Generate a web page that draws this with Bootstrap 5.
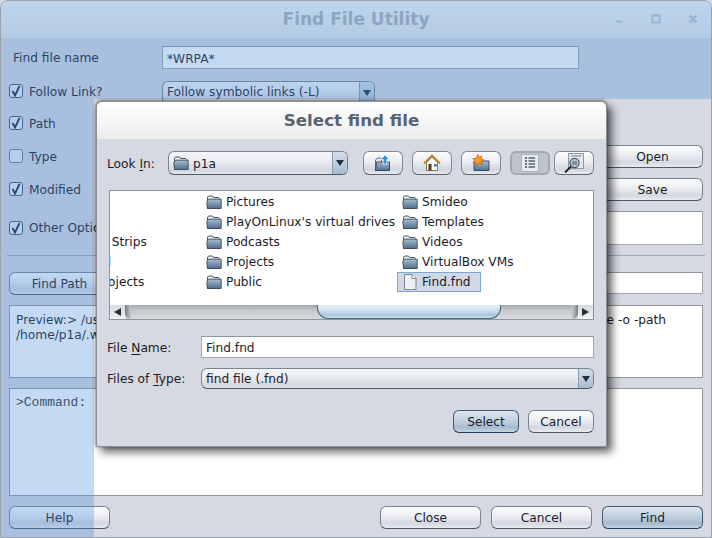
<!DOCTYPE html>
<html lang="en">
  <head>
    <meta charset="UTF-8" />
    <meta name="viewport" content="width=device-width, initial-scale=1.0" />
    <title>Find File Utility</title>
    <link
      href="https://cdn.jsdelivr.net/npm/bootstrap@5.3.0/dist/css/bootstrap.min.css"
      rel="stylesheet"
    />
    <style>
      html, body { margin: 0; background: #d6d9e1; }
      body, .btn, .form-control { font-family: "DejaVu Sans", sans-serif; font-size: 12.2px; color: #1c1c28; }

      .app-win { position: relative; width: 712px; height: 538px; overflow: hidden; background: #d6d9e1; border: 1px solid #9aa3ae; border-radius: 8px 8px 0 0; }
      .app-title { height: 37px; background: linear-gradient(#f6f7f7, #e8e9e9); font-size: 17px; font-weight: 700; color: #aeb2b3; }
      .app-controls { right: 12px; top: 12px; gap: 25px; }
      .app-body { padding: 8px 8px 0 8px; }

      .row-h { height: 23px; }
      .mt-12 { margin-top: 12px; }
      .mt-10 { margin-top: 10px; }
      .mt-8 { margin-top: 8px; }
      .left-col { width: 153px; flex: none; }
      .plain-lbl { padding-left: 4px; }
      .check-lbl { gap: 6px; }
      .under-dlg { width: 417px; height: 100%; }
      .txt-low { padding-top: 2px; }

      .form-check-input.swing-check { width: 14px; height: 14px; margin: 0; flex: none; border: 1px solid #69798c; border-radius: 3px; background-color: #e9edf3; box-shadow: none; }
      .form-check-input.swing-check:checked { background-color: #e9edf3; border-color: #3f5670; background-size: 14px; background-image: url("data:image/svg+xml,%3Csvg xmlns='http://www.w3.org/2000/svg' viewBox='0 0 14 14'%3E%3Cpath d='M3.5 7l2.500 4.500L10.500 2' fill='none' stroke='%23182838' stroke-width='1.8'/%3E%3C/svg%3E"); }
      .form-check-input.swing-check.check-high { margin-top: -2px; }

      .swing-field.form-control { height: 100%; padding: 2px 4px 0 4px; border: 1px solid #a3a8b0; border-top-color: #8f959e; border-radius: 0; background: #fff; box-shadow: none; line-height: 1; }
      .swing-box { border: 1px solid #92979f; background: #fff; padding: 6px 6px; line-height: 15px; }
      .preview-box { height: 73px; padding-top: 7px; }
      .preview-tail { margin-left: auto; margin-right: 30px; }
      .command-box { height: 108px; font-family: "Liberation Mono", monospace; font-size: 13px; color: #33363c; }
      .sep-line { height: 1px; margin: 10px -2px 16px -2px; background: #a5aab2; }

      .swing-btn.btn { width: 101px; height: 23px; padding: 2px 0 0 0; flex: none; border: 1px solid #7a8490; border-bottom-color: #4e5864; border-radius: 6px; background: linear-gradient(#fbfcfd, #ebedf2 45%, #d4d8e0 78%, #e8ebf0); line-height: 1; color: #1c1c28; }
      .swing-btn.btn-def { border-color: #3f5a76; border-bottom-color: #25405c; background: linear-gradient(#dbe4ed, #c4d2e0 45%, #a6bbcf 78%, #c5d4e2); }
      .swing-btn.dlg-btn { width: 66px; }

      .combo-box { height: 23px; border: 1px solid #7a8490; border-bottom-color: #4e5864; border-radius: 6px; overflow: hidden; background: linear-gradient(#f4f5f8, #e9ebf0 45%, #d3d7df 85%, #e3e6ec); }
      .combo-arrow { width: 15px; flex: none; height: 100%; border-left: 1px solid #8d9aa8; background: linear-gradient(#d3deea, #a8bdd2); }
      .combo-arrow::after { content: ""; border-left: 4px solid transparent; border-right: 4px solid transparent; border-top: 6px solid #22303e; }

      /* the translucent pane the app puts over its window while the dialog is open */
      .glass-pane { position: absolute; background: rgba(72, 139, 218, 0.32); pointer-events: none; }
      .glass-top { left: 0; top: 0; width: 100%; height: 98px; }
      .glass-left { left: 0; top: 98px; width: 93px; bottom: 0; }

      .dlg-win { position: absolute; left: 95px; top: 100px; width: 511px; height: 346px; border: 1px solid #8b9096; border-radius: 6px 6px 0 0; background: #d6d9e1; box-shadow: 5px 5px 9px rgba(0, 0, 0, 0.62), 0 -1px 3px rgba(0, 0, 0, 0.35), -1px 0 3px rgba(0, 0, 0, 0.25); overflow: visible; }
      .dlg-title { height: 37px; border-radius: 5px 5px 0 0; background: linear-gradient(#ffffff, #ececec); font-size: 16.700px; font-weight: 700; color: #58646f; }
      .dlg-body { padding: 12px 12px 0 10px; }
      .look-lbl { width: 61px; flex: none; }
      .tool-btn { width: 40px; height: 24px; flex: none; border: 1px solid #7f8893; border-bottom-color: #5c6570; border-radius: 6px; background: linear-gradient(#fbfcfd, #ebedf2 45%, #d2d6de 80%, #e8ebf0); }
      .tool-on { border: 2px solid #a4a9b1; background: #bfc3cb; }

      .file-pane { margin: 15px 0 16px 2px; border: 1px solid #8e949c; background: #fff; height: 130px; overflow: hidden; }
      .file-cols { height: 114px; padding-top: 1px; }
      .file-col { flex: none; }
      .col-a { width: 156px; margin-left: -65px; }
      .col-b { width: 196px; }
      .file-item { height: 20px; padding: 0 4px; gap: 4px; border: 1px solid transparent; white-space: nowrap; }
      .file-sel { width: 84px; background: #cfd8e4; border-color: #7ca6d3; }

      .scroll-track { height: 14px; background: linear-gradient(#a3a7ad, #c3c6cc 35%, #d9dbe0); position: relative; }
      .scroll-end { width: 15px; height: 100%; flex: none; background: linear-gradient(#d8dade, #eef0f3); }
      .arrow-l { border-top: 4px solid transparent; border-bottom: 4px solid transparent; border-right: 7px solid #2a2f36; }
      .arrow-r { border-top: 4px solid transparent; border-bottom: 4px solid transparent; border-left: 7px solid #2a2f36; }
      .scroll-thumb { position: absolute; left: 207px; width: 184px; top: 0; height: 14px; border: 1px solid #4a6680; border-top: 0; border-radius: 0 0 11px 11px; background: linear-gradient(#eaf1f7, #c3d7e8 55%, #a9c6dd 80%, #d5e3ee); }
      .scroll-cap { width: 6px; height: 100%; flex: none; }
      .cap-l { border-radius: 0 0 0 6px; background: linear-gradient(90deg, #777c83, #c8cbd0); }
      .cap-r { border-radius: 0 0 6px 0; background: linear-gradient(270deg, #777c83, #c8cbd0); }

      .name-lbl { width: 94px; flex: none; }
      .field-row { height: 22px; }
      u { text-underline-offset: 2px; }
    </style>
  </head>
  <body>
    <svg width="0" height="0" class="position-absolute">
      <defs>
        <linearGradient id="fold" x1="0" y1="0" x2="0" y2="1">
          <stop offset="0" stop-color="#a9bdd1" />
          <stop offset="1" stop-color="#4f6d8e" />
        </linearGradient>
        <symbol id="ico-folder" viewBox="0 0 16 16">
          <path d="M1.500 14.500V3.200l1-1.200h4l1.200 1.500h5l.8 1v10z" fill="#e9ecf0" stroke="#46525f" />
          <path d="M.8 7.500l2-2.300h12.400v9.300H1.500z" fill="url(#fold)" stroke="#3e4c5b" stroke-width=".9" />
        </symbol>
      </defs>
    </svg>

    <div class="app-win">
      <!-- main window -->
      <div class="app-title d-flex align-items-center justify-content-center position-relative">
        Find File Utility
        <div class="app-controls position-absolute d-flex align-items-center">
          <svg width="12" height="12" viewBox="0 0 12 12"><path d="M3 8.500h6" stroke="#c2c6c8" stroke-width="2" /></svg>
          <svg width="12" height="12" viewBox="0 0 12 12"><rect x="2.500" y="2.500" width="7" height="7" fill="none" stroke="#c2c6c8" stroke-width="2" /></svg>
          <svg width="12" height="12" viewBox="0 0 12 12"><path d="M2.500 2.500l7 7M9.500 2.500l-7 7" stroke="#c2c6c8" stroke-width="2.400" /></svg>
        </div>
      </div>

      <div class="app-body">
        <div class="d-flex align-items-center row-h">
          <div class="left-col plain-lbl txt-low">Find file name</div>
          <div class="under-dlg">
            <input class="form-control swing-field" value="*WRPA*" />
          </div>
        </div>

        <div class="d-flex align-items-center row-h mt-12">
          <label class="left-col d-flex align-items-center check-lbl"><input type="checkbox" class="form-check-input swing-check check-high" checked /> <span>Follow Link?</span></label>
          <div class="combo-box d-flex align-items-center" style="width: 213px">
            <span class="flex-grow-1 ps-1">Follow symbolic links (-L)</span>
            <span class="combo-arrow d-flex align-items-center justify-content-center"></span>
          </div>
        </div>

        <div class="d-flex align-items-center row-h mt-8">
          <label class="left-col d-flex align-items-center check-lbl"><input type="checkbox" class="form-check-input swing-check" checked /> <span class="txt-low">Path</span></label>
          <div class="under-dlg"><input class="form-control swing-field" /></div>
        </div>

        <div class="d-flex align-items-center row-h mt-10">
          <label class="left-col d-flex align-items-center check-lbl"><input type="checkbox" class="form-check-input swing-check" /> <span class="txt-low">Type</span></label>
          <div class="under-dlg"><input class="form-control swing-field" /></div>
          <button class="btn swing-btn ms-auto">Open</button>
        </div>

        <div class="d-flex align-items-center row-h mt-10">
          <label class="left-col d-flex align-items-center check-lbl"><input type="checkbox" class="form-check-input swing-check" checked /> <span class="txt-low">Modified</span></label>
          <div class="under-dlg"><input class="form-control swing-field" /></div>
          <button class="btn swing-btn ms-auto">Save</button>
        </div>

        <div class="d-flex align-items-center mt-10" style="height: 34px">
          <label class="left-col d-flex align-items-center check-lbl"><input type="checkbox" class="form-check-input swing-check" checked /> <span>Other Options</span></label>
          <div class="flex-grow-1 h-100"><input class="form-control swing-field" /></div>
        </div>

        <div class="sep-line"></div>

        <div class="d-flex align-items-start row-h gap-2">
          <button class="btn swing-btn">Find Path</button>
          <div class="flex-grow-1" style="height: 22px"><input class="form-control swing-field" /></div>
        </div>

        <div class="swing-box preview-box mt-10">
          <div class="d-flex"><span>Preview:&gt; /usr/bin/find</span><span class="preview-tail">-type file -o -path</span></div>
          <div>/home/p1a/.wine</div>
        </div>

        <div class="swing-box command-box mt-10">&gt;Command:</div>

        <div class="d-flex mt-10">
          <button class="btn swing-btn">Help</button>
          <div class="ms-auto d-flex" style="gap: 10px">
            <button class="btn swing-btn">Close</button>
            <button class="btn swing-btn">Cancel</button>
            <button class="btn swing-btn btn-def">Find</button>
          </div>
        </div>
      </div>

      <div class="glass-pane glass-top"></div>
      <div class="glass-pane glass-left"></div>

      <!-- file chooser -->
      <div class="dlg-win">
        <div class="dlg-title d-flex align-items-center justify-content-center">Select find file</div>
        <div class="dlg-body">
          <div class="d-flex align-items-center" style="height: 24px">
            <div class="look-lbl txt-low">Look <u>I</u>n:</div>
            <div class="combo-box d-flex align-items-center" style="width: 180px; height: 24px">
              <span class="flex-grow-1 d-flex align-items-center ps-1" style="gap: 4px">
                <svg width="16" height="16"><use href="#ico-folder" /></svg><span class="txt-low">p1a</span>
              </span>
              <span class="combo-arrow d-flex align-items-center justify-content-center"></span>
            </div>
            <div class="d-flex ms-auto" style="gap: 9px">
              <div class="tool-btn d-flex align-items-center justify-content-center">
                <svg width="18" height="18" viewBox="0 0 18 18">
                  <path d="M1.500 16.500V6l2-2h4v12.500z" fill="#dfe5eb" stroke="#3e4c5b" stroke-width=".8" />
                  <path d="M1.500 16.500L2.500 8h13v8.500z" fill="url(#fold)" stroke="#33414f" stroke-width=".9" />
                  <path d="M11 1L6.800 5.400h2.400V10h3.600V5.400h2.400z" fill="#2f8fdc" stroke="#fff" stroke-width=".7" />
                </svg>
              </div>
              <div class="tool-btn d-flex align-items-center justify-content-center">
                <svg width="18" height="18" viewBox="0 0 18 18">
                  <path d="M3.500 8.500v8h11v-8L9 3z" fill="#fbfaf0" stroke="#6e5a2c" stroke-width=".8" />
                  <path d="M1 9.500L9 1.500l8 8" fill="none" stroke="#b88a2c" stroke-width="1.800" />
                  <rect x="5.500" y="10" width="3" height="6.500" fill="#4a3a20" />
                  <rect x="11" y="10" width="2.600" height="2.600" fill="#3d6ea8" />
                </svg>
              </div>
              <div class="tool-btn d-flex align-items-center justify-content-center">
                <svg width="18" height="18" viewBox="0 0 18 18">
                  <path d="M2 16.500V7h15v9.500z" fill="url(#fold)" stroke="#33414f" stroke-width=".9" />
                  <path d="M6 .5l1.200 2.800L10 2l-1 2.900 3 1-2.800 1.500 1 2.900-3-1.300L5 11.500 4.200 8.600 1 9l1.900-2.400L.8 4.500l3 0z" fill="#f6a21d" stroke="#d9480f" stroke-width=".7" />
                </svg>
              </div>
              <div class="tool-btn tool-on d-flex align-items-center justify-content-center">
                <svg width="18" height="18" viewBox="0 0 18 18">
                  <rect x=".5" y=".5" width="17" height="17" fill="#e6ebf1" stroke="#a9b3be" />
                  <path d="M4 4h2M4 7h2M4 10h2M4 13h2" stroke="#3c4650" stroke-width="1.400" />
                  <path d="M7.500 4H14M7.500 7H14M7.500 10H14M7.500 13H14" stroke="#5a6570" stroke-width="1.400" />
                </svg>
              </div>
              <div class="tool-btn d-flex align-items-center justify-content-center" style="margin-left: -5px">
                <svg width="20" height="20" viewBox="0 0 20 20">
                  <rect x="4.500" y=".5" width="15" height="15" fill="#e3e8ee" stroke="#8f99a4" />
                  <path d="M7 3h10" stroke="#6f7a85" />
                  <circle cx="10.500" cy="10" r="4.600" fill="#b6c6d6" stroke="#4d5a67" stroke-width="1.200" />
                  <path d="M8 9h5M8 11h5" stroke="#4d5a67" />
                  <path d="M7 13.500L1 19.500" stroke="#14181c" stroke-width="1.800" />
                </svg>
              </div>
            </div>
          </div>

          <div class="file-pane">
            <div class="file-cols d-flex">
              <div class="file-col col-a d-flex flex-column align-items-start">
                <div class="file-item d-flex align-items-center"><svg width="16" height="16"><use href="#ico-folder" /></svg>Apps</div>
                <div class="file-item d-flex align-items-center"><svg width="16" height="16"><use href="#ico-folder" /></svg>Books</div>
                <div class="file-item d-flex align-items-center"><svg width="16" height="16"><use href="#ico-folder" /></svg>Comic Strips</div>
                <div class="file-item d-flex align-items-center"><svg width="16" height="16"><use href="#ico-folder" /></svg>Kennel</div>
                <div class="file-item d-flex align-items-center"><svg width="16" height="16"><use href="#ico-folder" /></svg>Our Projects</div>
              </div>
              <div class="file-col col-b d-flex flex-column align-items-start">
                <div class="file-item d-flex align-items-center"><svg width="16" height="16"><use href="#ico-folder" /></svg>Pictures</div>
                <div class="file-item d-flex align-items-center"><svg width="16" height="16"><use href="#ico-folder" /></svg>PlayOnLinux's virtual drives</div>
                <div class="file-item d-flex align-items-center"><svg width="16" height="16"><use href="#ico-folder" /></svg>Podcasts</div>
                <div class="file-item d-flex align-items-center"><svg width="16" height="16"><use href="#ico-folder" /></svg>Projects</div>
                <div class="file-item d-flex align-items-center"><svg width="16" height="16"><use href="#ico-folder" /></svg>Public</div>
              </div>
              <div class="file-col d-flex flex-column align-items-start">
                <div class="file-item d-flex align-items-center"><svg width="16" height="16"><use href="#ico-folder" /></svg>Smideo</div>
                <div class="file-item d-flex align-items-center"><svg width="16" height="16"><use href="#ico-folder" /></svg>Templates</div>
                <div class="file-item d-flex align-items-center"><svg width="16" height="16"><use href="#ico-folder" /></svg>Videos</div>
                <div class="file-item d-flex align-items-center"><svg width="16" height="16"><use href="#ico-folder" /></svg>VirtualBox VMs</div>
                <div class="file-item file-sel d-flex align-items-center">
                  <svg width="16" height="16" viewBox="0 0 16 16"><path d="M2.500 .5h7.500l4 4v11h-11.500z" fill="#eef1f4" stroke="#7f8891" /><path d="M10 .5v4h4" fill="#fff" stroke="#7f8891" /></svg>Find.fnd
                </div>
              </div>
            </div>
            <div class="scroll-track d-flex">
              <div class="scroll-end d-flex align-items-center justify-content-center"><span class="arrow-l"></span></div>
              <div class="scroll-cap cap-l"></div>
              <div class="scroll-thumb"></div>
              <div class="scroll-cap cap-r ms-auto"></div>
              <div class="scroll-end d-flex align-items-center justify-content-center"><span class="arrow-r"></span></div>
            </div>
          </div>

          <div class="d-flex align-items-center field-row">
            <div class="name-lbl txt-low">File <u>N</u>ame:</div>
            <div class="flex-grow-1 h-100"><input class="form-control swing-field" value="Find.fnd" /></div>
          </div>
          <div class="d-flex align-items-center mt-10">
            <div class="name-lbl txt-low">Files of <u>T</u>ype:</div>
            <div class="combo-box flex-grow-1 d-flex align-items-center" style="height: 21px">
              <span class="flex-grow-1 ps-1 txt-low">find file (.fnd)</span>
              <span class="combo-arrow d-flex align-items-center justify-content-center"></span>
            </div>
          </div>
          <div class="d-flex justify-content-end" style="margin-top: 21px; gap: 9px">
            <button class="btn swing-btn dlg-btn btn-def">Select</button>
            <button class="btn swing-btn dlg-btn">Cancel</button>
          </div>
        </div>
      </div>
    </div>
  </body>
</html>
